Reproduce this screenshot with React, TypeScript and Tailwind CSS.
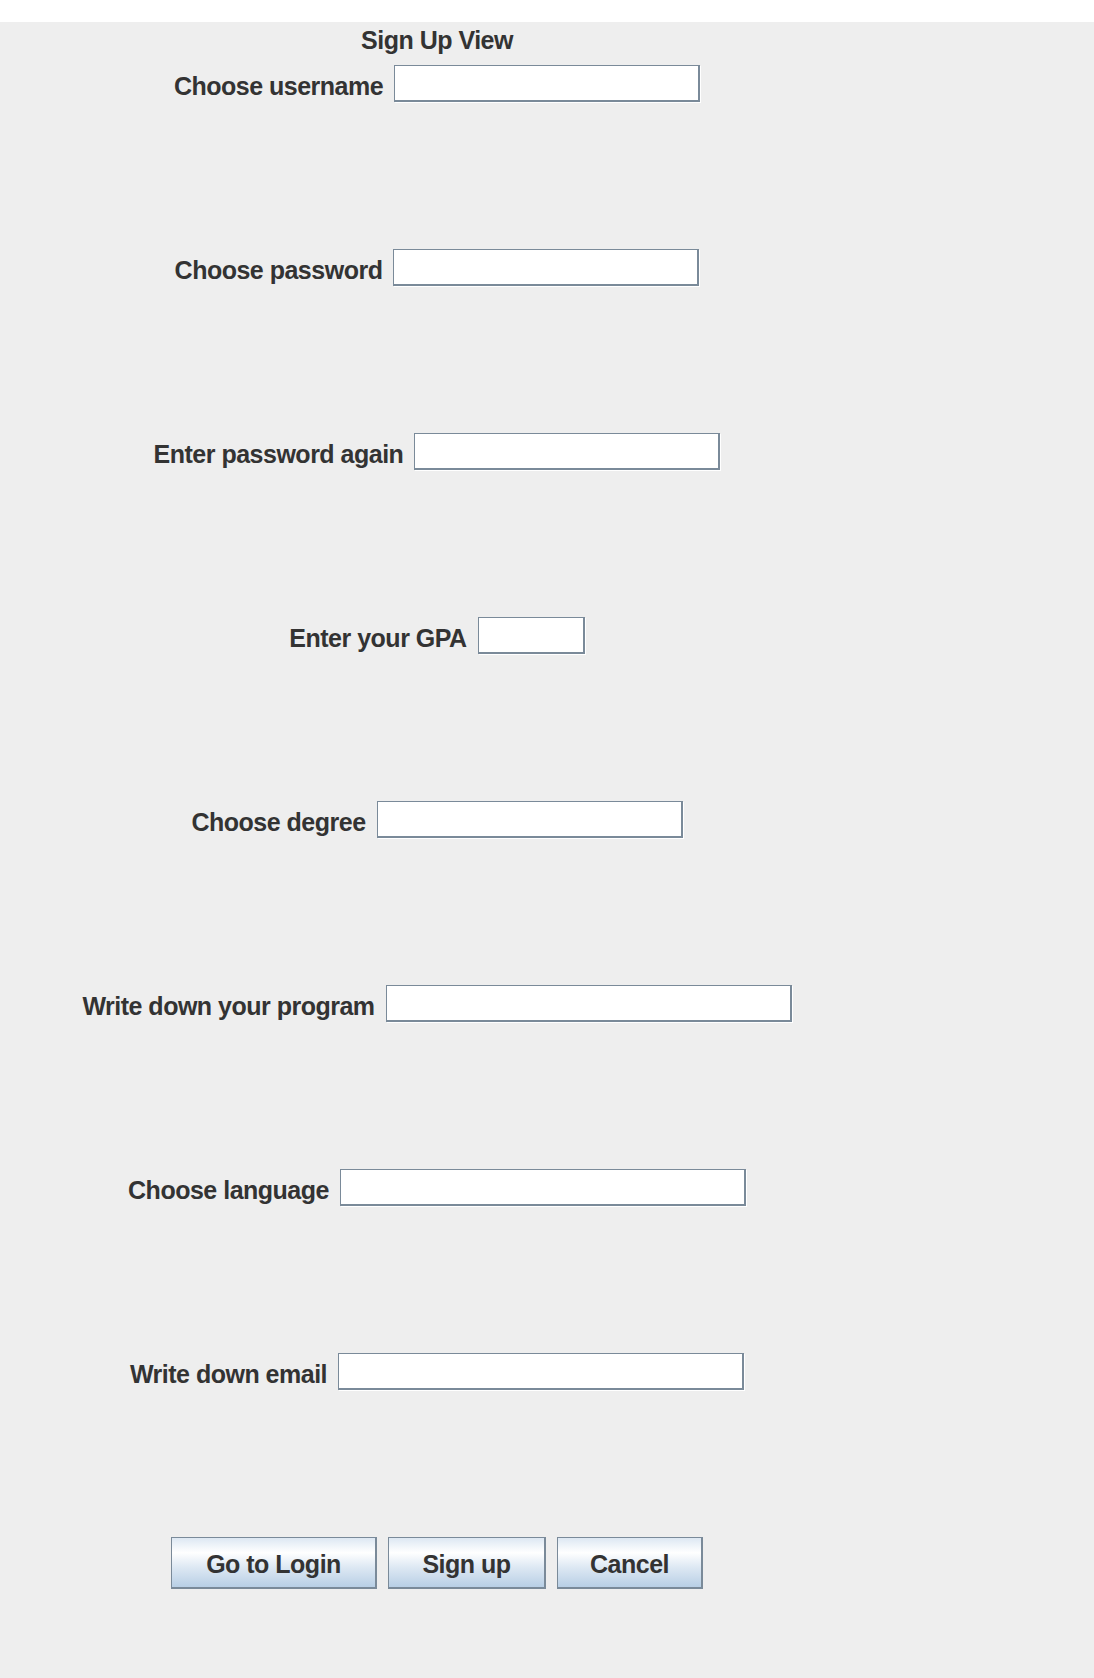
import React from "react";

const rows = [
  { label: "Choose username", width: "w-[306px]" },
  { label: "Choose password", width: "w-[306px]" },
  { label: "Enter password again", width: "w-[306px]" },
  { label: "Enter your GPA", width: "w-[107px]" },
  { label: "Choose degree", width: "w-[306px]" },
  { label: "Write down your program", width: "w-[406px]" },
  { label: "Choose language", width: "w-[406px]" },
  { label: "Write down email", width: "w-[406px]" },
];

const buttons = [
  { text: "Go to Login", width: "w-[206px]" },
  { text: "Sign up", width: "w-[158px]" },
  { text: "Cancel", width: "w-[146px]" },
];

const Field = ({ width }: { width: string }) => (
  <input
    type="text"
    className={`${width} h-[37px] bg-white border border-[#7a8a99] border-r-2 border-b-2 shadow-[1px_1px_0_#ffffff] outline-none px-1 text-[22px]`}
  />
);

const App = () => {
  return (
    <div className="h-[1678px] overflow-hidden bg-[#eeeeee] text-[#333333] font-['Liberation_Sans',Arial,sans-serif]">
      <div className="h-[22px] bg-white" />
      <div className="w-[874px] flex flex-col">
        <div className="h-[43px] pt-[4px] flex justify-center">
          <h1 className="text-[25px] leading-[28px] font-bold tracking-[-0.5px]">Sign Up View</h1>
        </div>

        <div className="flex flex-col gap-[147px]">
          {rows.map((row, i) => (
            <div key={i} className="h-[37px] flex justify-center items-center gap-[11px]">
              <label className="mt-[5px] text-[25px] leading-[28px] font-bold tracking-[-0.5px] whitespace-nowrap">
                {row.label}
              </label>
              <Field width={row.width} />
            </div>
          ))}

          <div className="flex justify-center gap-[11px]">
            {buttons.map((b, i) => (
              <button
                key={i}
                className={`${b.width} h-[52px] pt-[4px] border border-[#7a8a99] border-r-2 border-b-2 bg-[linear-gradient(to_bottom,#dde8f3_0%,#ffffff_30%,#dde8f3_60%,#b8cfe5_100%)] text-[25px] font-bold tracking-[-0.5px] text-[#333333]`}
              >
                {b.text}
              </button>
            ))}
          </div>
        </div>
      </div>
    </div>
  );
};

export default App;
